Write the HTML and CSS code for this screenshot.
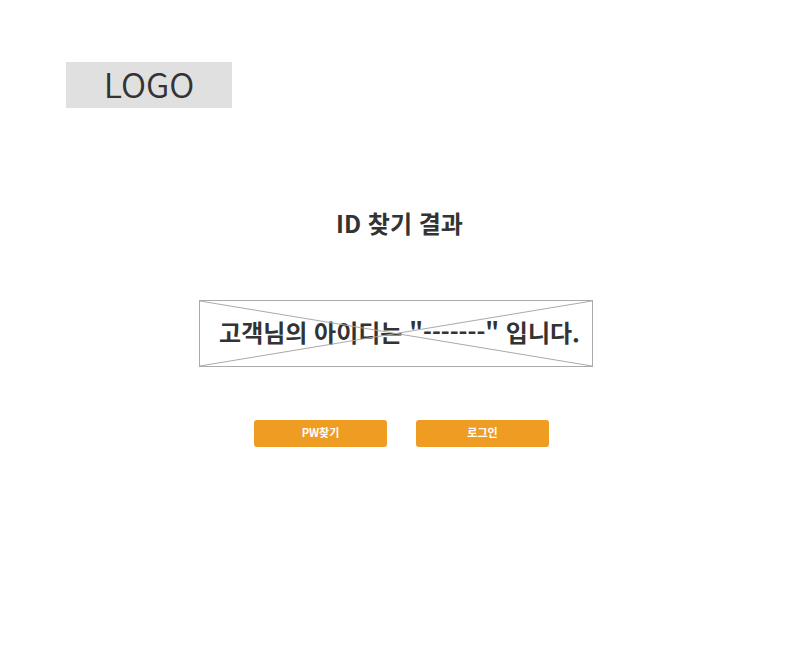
FILE: index.html
```html
<!DOCTYPE html>
<html lang="ko">
<head>
<meta charset="utf-8">
<title>ID 찾기 결과</title>
<link rel="stylesheet" href="styles.css">
</head>
<body>
<header class="header"><a class="logo" href="#">LOGO</a></header>
<main class="result">
  <h1 class="title">ID 찾기 결과</h1>
  <div class="message">
    <svg class="cross" viewBox="0 0 100 100" preserveAspectRatio="none" aria-hidden="true">
      <path d="M0 0L100 100M100 0L0 100"/>
    </svg>
    <p class="message-text">고객님의 아이디는 "-------" 입니다.</p>
  </div>
  <div class="actions">
    <button class="button" type="button">PW찾기</button>
    <button class="button" type="button">로그인</button>
  </div>
</main>
</body>
</html>
```
FILE: styles.css
```css
* {
  box-sizing: border-box;
}

body {
  margin: 0;
  background: #fff;
  color: #333;
  font-family: "Noto Sans CJK KR", sans-serif;
}

.header {
  display: flex;
  padding: 62px 66px 0;
}

.logo {
  min-width: 166px;
  padding-bottom: 2px;
  background: #e0e0e0;
  color: #333;
  font-size: 34px;
  font-weight: 350;
  line-height: 44px;
  text-align: center;
  text-decoration: none;
}

.result {
  display: flex;
  flex-direction: column;
  align-items: center;
  padding-top: 97px;
}

.title {
  margin: 0 0 0 2px;
  font-size: 24px;
  font-weight: 700;
  line-height: 36px;
}

.message {
  position: relative;
  margin: 59px 5px 0 0;
  padding: 13px 12px 17px 19px;
  border: 1px solid #aaa;
}

.message-text {
  margin: 0;
  font-size: 24px;
  font-weight: 700;
  line-height: 35px;
  white-space: nowrap;
}

.cross {
  position: absolute;
  inset: 0;
  width: 100%;
  height: 100%;
}

.cross path {
  fill: none;
  stroke: #aaa;
  vector-effect: non-scaling-stroke;
}

.actions {
  display: flex;
  gap: 29px;
  margin: 53px 0 0 6px;
}

.button {
  width: 133px;
  height: 27px;
  padding: 0 0 2px;
  border: 0;
  border-radius: 3px;
  background: #ee9c22;
  color: #fff;
  font: 700 11px/25px "Noto Sans CJK KR", sans-serif;
}
```
